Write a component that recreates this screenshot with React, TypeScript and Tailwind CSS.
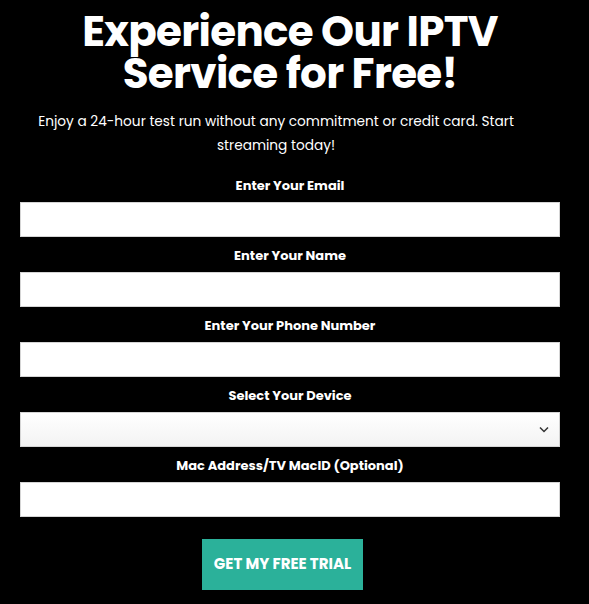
import React from "react";

const font = { fontFamily: '"Poppins", "Inter", "Open Sans", sans-serif' };

function Field({ label, children }: { label: string; children: React.ReactNode }) {
  return (
    <div className="flex flex-col">
      <label className="h-[35px] flex items-center justify-center text-[13px] font-bold text-white pt-[2px]">
        {label}
      </label>
      {children}
    </div>
  );
}

function Input() {
  return <input className="h-[35px] w-full bg-white border border-[#d5d5d5] outline-none" />;
}

export default function App() {
  return (
    <div className="min-h-screen w-full bg-black" style={font}>
      <div className="w-[580px] px-5">
        <h1 className="pt-[11px] text-center text-[42px] font-bold leading-[42px] tracking-[-0.7px] text-white">
          Experience Our IPTV
          <br />
          Service for Free!
        </h1>
        <p className="mt-[15px] pr-[28px] text-center text-[13.7px] leading-[24px] text-white">
          Enjoy a 24-hour test run without any commitment or credit card. Start streaming today!
        </p>
        <form className="mt-[9px] flex flex-col">
          <Field label="Enter Your Email">
            <Input />
          </Field>
          <Field label="Enter Your Name">
            <Input />
          </Field>
          <Field label="Enter Your Phone Number">
            <Input />
          </Field>
          <Field label="Select Your Device">
            <div className="relative h-[35px] w-full border border-[#d5d5d5] bg-gradient-to-b from-white to-[#f3f3f3]">
              <svg
                className="absolute right-[10px] top-[13px]"
                width="10"
                height="7"
                viewBox="0 0 10 7"
                fill="none"
              >
                <path d="M1 1.5L5 5.5L9 1.5" stroke="#333" strokeWidth="1.5" />
              </svg>
            </div>
          </Field>
          <Field label="Mac Address/TV MacID (Optional)">
            <Input />
          </Field>
          <div className="mt-[22px] flex justify-center pr-[15px]">
            <button
              type="button"
              className="h-[51px] w-[161px] bg-[#2bb19a] text-[15px] font-bold uppercase text-white"
            >
              Get My Free Trial
            </button>
          </div>
        </form>
      </div>
    </div>
  );
}
